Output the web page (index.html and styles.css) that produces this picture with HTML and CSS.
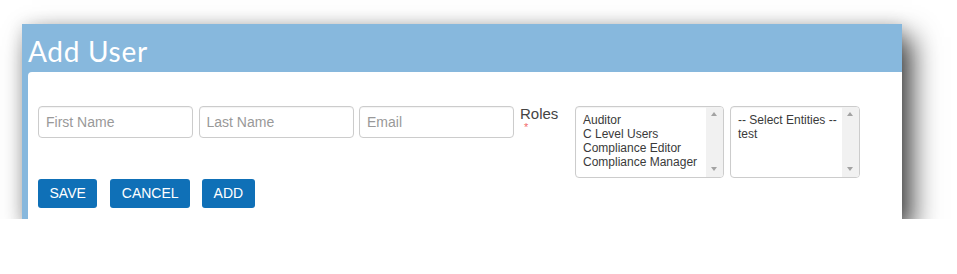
FILE: index.html
```html
<!DOCTYPE html>
<html>
<head>
<meta charset="utf-8">
<title>Add User</title>
<link rel="stylesheet" href="styles.css">
</head>
<body>
<div class="page">
  <div class="panel">
    <div class="panel-head">Add User</div>
    <div class="panel-body">
      <div class="form-row">
        <input class="field" type="text" placeholder="First Name">
        <input class="field" type="text" placeholder="Last Name">
        <input class="field" type="text" placeholder="Email">
        <div class="label-block">
          <span class="label">Roles</span>
          <span class="req">*</span>
        </div>
        <div class="listbox roles">
          <div class="options">
            <div>Auditor</div>
            <div>C Level Users</div>
            <div>Compliance Editor</div>
            <div>Compliance Manager</div>
          </div>
          <div class="scroll"><span class="arr up"></span><span class="arr down"></span></div>
        </div>
        <div class="listbox entities">
          <div class="options">
            <div>-- Select Entities --</div>
            <div>test</div>
          </div>
          <div class="scroll"><span class="arr up"></span><span class="arr down"></span></div>
        </div>
      </div>
      <div class="actions">
        <button class="btn">SAVE</button>
        <button class="btn">CANCEL</button>
        <button class="btn">ADD</button>
      </div>
    </div>
  </div>
</div>
</body>
</html>
```

FILE: styles.css
```css
html, body {
  margin: 0;
  padding: 0;
  background: #ffffff;
}
.page {
  padding: 24px 0 0 22px;
  font-family: "Liberation Sans", Arial, sans-serif;
}
.panel {
  width: 880px;
  height: 195px;
  background: #87b8dd;
  display: flex;
  flex-direction: column;
  box-shadow: 0 0 14px rgba(0, 0, 0, 0.1), 10px 13px 26px rgba(0, 0, 0, 0.75);
}
.panel-head {
  height: 48px;
  box-sizing: border-box;
  padding: 10px 0 0 6px;
  color: #ffffff;
  font-family: Lato, "Open Sans", sans-serif;
  font-size: 28px;
  line-height: 34px;
  letter-spacing: 0.7px;
}
.panel-body {
  flex: 1;
  margin-left: 6px;
  background: #ffffff;
  border-top-left-radius: 4px;
  padding: 34px 0 0 10px;
}
.form-row {
  display: flex;
  align-items: flex-start;
}
.field {
  width: 155px;
  height: 32px;
  box-sizing: border-box;
  margin: 0 5.5px 0 0;
  border: 1px solid #cccccc;
  border-radius: 4px;
  padding: 0 7px;
  font-family: "Liberation Sans", Arial, sans-serif;
  font-size: 14px;
  color: #555;
  background: #fff;
  box-shadow: inset 0 1px 1px rgba(0, 0, 0, 0.05);
}
.field::placeholder {
  color: #999999;
}
.label-block {
  width: 55px;
  margin-left: 0.5px;
  display: flex;
  flex-direction: column;
}
.label {
  font-size: 15px;
  line-height: 16px;
  color: #444;
}
.req {
  color: #f26a6a;
  font-size: 11px;
  line-height: 10px;
  margin-left: 4px;
}
.listbox {
  height: 72px;
  box-sizing: border-box;
  border: 1px solid #cccccc;
  border-radius: 4px;
  display: flex;
  overflow: hidden;
  background: #fff;
  box-shadow: inset 0 1px 1px rgba(0, 0, 0, 0.05);
}
.roles {
  width: 149px;
  margin-left: 0;
  margin-right: 6px;
}
.entities {
  width: 130px;
}
.options {
  flex: 1;
  padding: 6px 0 0 7px;
  font-size: 12px;
  line-height: 14px;
  color: #3a3a3a;
  white-space: nowrap;
}
.scroll {
  width: 17px;
  background: #f1f1f1;
  position: relative;
}
.arr {
  position: absolute;
  left: 5px;
  width: 0;
  height: 0;
  border-left: 3.5px solid transparent;
  border-right: 3.5px solid transparent;
}
.arr.up {
  top: 5px;
  border-bottom: 4px solid #a3a3a3;
}
.arr.down {
  bottom: 6px;
  border-top: 4px solid #a3a3a3;
}
.actions {
  display: flex;
  gap: 12px;
  margin-top: 1px;
}
.btn {
  height: 29px;
  padding: 0 11.5px;
  border: none;
  border-radius: 3px;
  background: #0f70b7;
  color: #ffffff;
  font-family: "Liberation Sans", Arial, sans-serif;
  font-size: 14px;
  line-height: 29px;
}
.btn:first-child {
  margin-right: 1px;
}
```
